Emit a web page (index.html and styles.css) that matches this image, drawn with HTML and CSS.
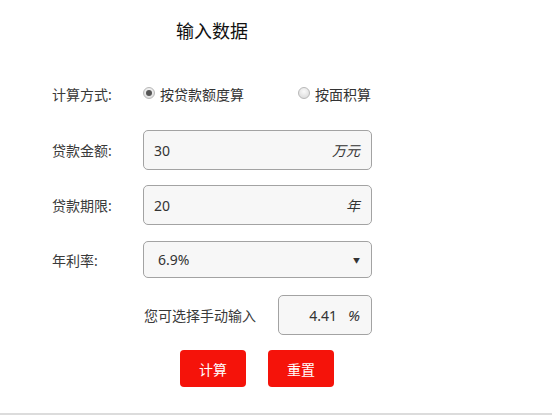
FILE: index.html
```html
<!DOCTYPE html>
<html lang="zh-CN">
<head>
<meta charset="utf-8">
<title>输入数据</title>
<link rel="stylesheet" href="styles.css">
</head>
<body>
<div class="page">
  <h1 class="title">输入数据</h1>
  <div class="row row-radio">
    <span class="label">计算方式:</span>
    <label class="opt opt-first"><span class="radio checked"></span>按贷款额度算</label>
    <label class="opt"><span class="radio"></span>按面积算</label>
  </div>
  <div class="row row-input">
    <span class="label">贷款金额:</span>
    <div class="field"><span class="val">30</span><span class="unit">万元</span></div>
  </div>
  <div class="row row-input row-gap15">
    <span class="label">贷款期限:</span>
    <div class="field"><span class="val">20</span><span class="unit">年</span></div>
  </div>
  <div class="row row-select">
    <span class="label">年利率:</span>
    <div class="field select"><span class="val">6.9%</span><span class="arrow">▼</span></div>
  </div>
  <div class="row row-manual">
    <span class="manual-text">您可选择手动输入</span>
    <div class="field small"><span class="val">4.41</span><span class="unit">%</span></div>
  </div>
  <div class="buttons">
    <button class="btn">计算</button>
    <button class="btn">重置</button>
  </div>
</div>
<div class="footer-line"></div>
</body>
</html>
```
FILE: styles.css
```css
* { box-sizing: border-box; }
html, body { margin: 0; padding: 0; background: #fff; }
body {
  font-family: "Noto Sans", "Noto Sans CJK SC", sans-serif;
  color: #333;
  font-size: 14px;
  width: 552px;
  height: 417px;
  overflow: hidden;
}
.page { height: 413px; }
.title {
  margin: 0;
  padding: 19px 0 0 176px;
  height: 44px;
  font-size: 18px;
  line-height: 24px;
  font-weight: normal;
  color: #111;
}
.row {
  display: flex;
  align-items: center;
  padding-left: 52px;
}
.label { width: 91px; flex: none; color: #3a3a3a; }
.row-radio { margin-top: 30px; height: 40px; }
.opt { display: flex; align-items: center; }
.opt-first { width: 155px; }
.radio {
  width: 12px; height: 12px;
  border-radius: 50%;
  border: 1px solid #b8b8b8;
  background: radial-gradient(circle at 50% 35%, #fafafa, #d6d6d6);
  margin-right: 5px;
  position: relative;
  top: -1px;
}
.radio.checked::after {
  content: "";
  position: absolute;
  left: 2px; top: 2px;
  width: 6px; height: 6px;
  border-radius: 50%;
  background: #555;
}
.row-input { margin-top: 16px; height: 40px; }
.row-gap15 { margin-top: 15px; }
.row-select { margin-top: 16px; height: 37px; }
.field {
  width: 229px;
  height: 100%;
  border: 1px solid #a3a3a3;
  border-radius: 5px;
  background: #f7f7f7;
  display: flex;
  align-items: center;
  justify-content: space-between;
  padding: 0 11px 0 10px;
  font-size: 14px;
  color: #333;
}
.unit { font-style: italic; font-size: 14px; }
.select { padding-left: 14px; padding-right: 11px; }
.arrow { font-size: 7px; color: #333; }
.row-manual { margin-top: 17px; height: 40px; padding-left: 144px; }
.manual-text { width: 134px; flex: none; color: #3a3a3a; }
.field.small { width: 94px; justify-content: flex-end; padding-right: 11px; }
.field.small .unit { margin-left: 11px; font-size: 15px; }
.buttons {
  display: flex;
  gap: 22px;
  padding-left: 180px;
  margin-top: 15px;
}
.btn {
  width: 66px;
  height: 37px;
  border: none;
  border-radius: 4px;
  background: #f5130a;
  color: #fff;
  font-family: "Noto Sans", "Noto Sans CJK SC", sans-serif;
  font-size: 14px;
  padding: 0;
}
.footer-line { height: 4px; border-top: 2px solid #dcdcdc; }
```
